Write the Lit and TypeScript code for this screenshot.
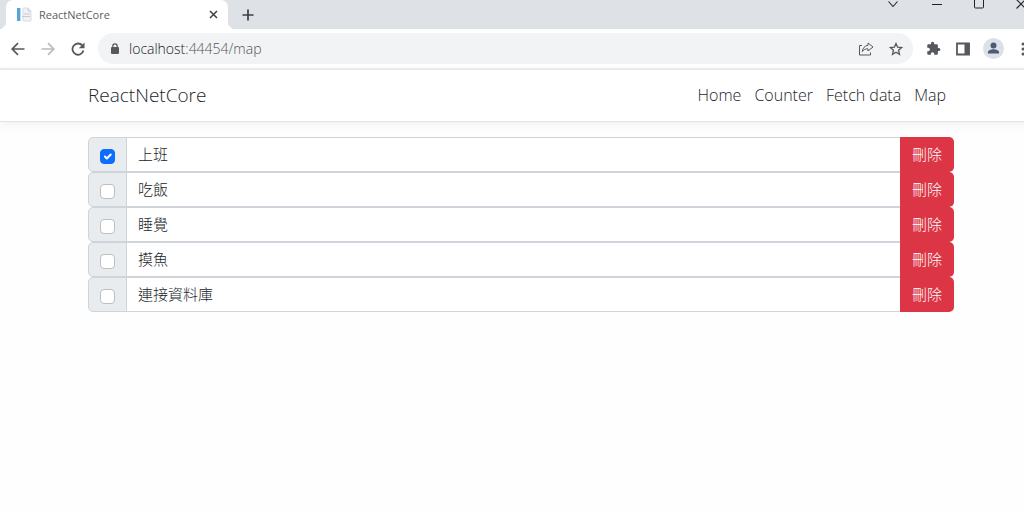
import { LitElement, html, css } from "lit";
import { customElement, state } from "lit/decorators.js";

interface Todo {
  title: string;
  done: boolean;
}

@customElement("browser-chrome")
class BrowserChrome extends LitElement {
  static styles = css`
    :host { display: block; font-family: "Open Sans", "Noto Sans", sans-serif; }
    svg { display: block; }
    button {
      display: flex; align-items: center; justify-content: center;
      padding: 0; border: 0; background: none; color: #55595e; flex: none;
    }
    .tabs { display: flex; height: 29px; background: #dee1e6; padding-left: 6px; }
    .tab {
      position: relative; display: flex; align-items: center; box-sizing: border-box;
      width: 222px; padding: 0 7px 0 11px; background: #fff; border-top-right-radius: 7px;
      border-top-left-radius: 7px;
    }
    .tab::before, .tab::after {
      content: ""; position: absolute; bottom: 0; width: 7px; height: 7px;
    }
    .tab::before { left: -7px; background: radial-gradient(circle at 0 0, #dee1e6 7px, #fff 7px); }
    .tab::after { right: -7px; background: radial-gradient(circle at 100% 0, #dee1e6 7px, #fff 7px); }
    .tab-title { flex: 1; margin-left: 7px; font-size: 11px; font-weight: 400; line-height: 16px; color: #5a5e62; }
    .close { width: 16px; height: 29px; color: #3c4043; }
    .new { width: 40px; color: #3c4043; }
    .window { display: flex; margin-left: auto; height: 9px; }
    .window button { width: 42px; color: #222; align-items: flex-start; }
    .window .search { width: 46px; }
    .bar {
      display: flex; align-items: center; height: 39px; padding: 0 4px 0 3px;
      background: #fff; border-bottom: 2px solid #ebecee;
    }
    .tool { width: 30px; height: 30px; }
    .muted { color: #b9bbbe; }
    .address {
      display: flex; align-items: center; flex: 1; box-sizing: border-box; min-width: 0; height: 31px;
      margin: 0 5px; padding: 0 2px 0 10px; border-radius: 16px; background: #f1f3f4;
    }
    .url { position: relative; flex: 1; margin-left: 7px; font-size: 14px; line-height: 20px; }
    .url input {
      width: 100%; box-sizing: border-box; border: 0; padding: 0; outline: 0; background: none;
      font: inherit; color: transparent; display: block;
    }
    .shown { position: absolute; inset: 0; pointer-events: none; color: #50555a; }
    .host { color: #202124; }
    .avatar { width: 21px; height: 21px; border-radius: 50%; background: #dce0e7; color: #4c5a75; overflow: hidden; }
  `;

  render() {
    return html`
      <div class="tabs">
        <div class="tab">
          <svg width="15" height="15" viewBox="0 0 15 15">
            <path d="M0 1h3v13H0z" fill="#55a6d6" /><path d="M3 1h1v13H3z" fill="#b9dcee" />
            <path d="M6 1h5l3 3v10H6z" fill="#f1f2f5" stroke="#d3d6dc" stroke-width=".8" />
            <path d="M11 1v3h3M7 7h6M5 9.500h8" fill="none" stroke="#bcc2cb" stroke-width=".8" />
          </svg>
          <span class="tab-title">ReactNetCore</span>
          <button class="close" aria-label="Close tab">
            <svg width="9" height="9" viewBox="0 0 9 9"><path d="M1 1l7 7M8 1L1 8" stroke="currentColor" stroke-width="1.5" /></svg>
          </button>
        </div>
        <button class="new" aria-label="New tab">
          <svg width="12" height="12" viewBox="0 0 12 12"><path d="M6 .5v11M.5 6h11" stroke="currentColor" stroke-width="1.7" /></svg>
        </button>
        <div class="window">
          <button class="search" aria-label="Search tabs">
            <svg width="12" height="9" viewBox="0 0 12 9"><path d="M1.500 1.500L6 6.500l4.500-5" fill="none" stroke="currentColor" stroke-width="1.100" /></svg>
          </button>
          <button aria-label="Minimize">
            <svg width="10" height="9" viewBox="0 0 10 9"><path d="M0 4.500h10" stroke="currentColor" /></svg>
          </button>
          <button aria-label="Maximize">
            <svg width="10" height="9" viewBox="0 0 10 9"><rect x=".5" y="-1.500" width="9" height="9.500" rx="1" fill="none" stroke="currentColor" /></svg>
          </button>
          <button aria-label="Close">
            <svg width="10" height="9" viewBox="0 0 10 9"><path d="M.5-.5l9 9M9.500-.5l-9 9" stroke="currentColor" stroke-width="1.100" /></svg>
          </button>
        </div>
      </div>
      <div class="bar">
        <button class="tool" aria-label="Back">
          <svg width="14" height="14" viewBox="0 0 14 14"><path d="M13.500 7H1.500M7 1.200L1.200 7 7 12.800" fill="none" stroke="currentColor" stroke-width="1.700" /></svg>
        </button>
        <button class="tool muted" aria-label="Forward">
          <svg width="14" height="14" viewBox="0 0 14 14"><path d="M.5 7h12M7 1.200L12.800 7 7 12.800" fill="none" stroke="currentColor" stroke-width="1.700" /></svg>
        </button>
        <button class="tool" aria-label="Reload">
          <svg width="14" height="14" viewBox="0 0 14 14">
            <path d="M11.300 3.400A5.600 5.600 0 1 0 12.500 8.600" fill="none" stroke="currentColor" stroke-width="1.800" />
            <path d="M13.500.5v5.800H7.800z" fill="currentColor" />
          </svg>
        </button>
        <div class="address">
          <svg width="14" height="14" viewBox="0 0 14 14">
            <rect x="3" y="5" width="8" height="7" rx="1" fill="#55595e" />
            <path d="M4.800 5.500V4a2.200 2.200 0 0 1 4.400 0v1.500" fill="none" stroke="#55595e" stroke-width="1.200" />
          </svg>
          <div class="url">
            <input aria-label="Address" value="localhost:44454/map" />
            <div class="shown" aria-hidden="true"><span class="host">localhost</span>:44454/map</div>
          </div>
          <button class="tool" aria-label="Share">
            <svg width="16" height="14" viewBox="0 0 16 14" fill="none" stroke="currentColor">
              <path d="M4 3.500H1.500v9.500h11V10.500" />
              <path d="M10 1L15 5l-5 4V6.800C7.500 6.700 5.700 7.500 4.300 9.600 4.700 6 6.700 3.800 10 3.300z" stroke-linejoin="round" />
            </svg>
          </button>
          <button class="tool" aria-label="Bookmark">
            <svg width="14" height="14" viewBox="0 0 14 14"><path d="M7 1.500l1.600 3.700 4 .4-3 2.700.9 4L7 10.200l-3.500 2.100.9-4-3-2.700 4-.4z" fill="none" stroke="currentColor" stroke-width="1.300" /></svg>
          </button>
        </div>
        <button class="tool" aria-label="Extensions">
          <svg width="15" height="15" viewBox="0 0 24 24"><path fill="currentColor" d="M20.500 11H19V7c0-1.100-.9-2-2-2h-4V3.500a2.500 2.500 0 0 0-5 0V5H4c-1.100 0-2 .9-2 2v3.800h1.500a2.700 2.700 0 0 1 0 5.400H2V20c0 1.100.9 2 2 2h3.800v-1.500a2.700 2.700 0 0 1 5.400 0V22H17c1.100 0 2-.9 2-2v-4h1.500a2.500 2.500 0 0 0 0-5z" /></svg>
        </button>
        <button class="tool" aria-label="Side panel">
          <svg width="14" height="14" viewBox="0 0 14 14"><path d="M1 1.500h12v11H1z" fill="none" stroke="currentColor" stroke-width="1.800" /><path d="M8.500 1h5v12h-5z" fill="currentColor" /></svg>
        </button>
        <button class="tool" aria-label="Profile">
          <svg class="avatar" viewBox="0 0 21 21"><circle cx="10.500" cy="7.500" r="3" fill="currentColor" /><path d="M5 15.500v-1.200c0-2 3-3 5.500-3s5.500 1 5.500 3v1.200z" fill="currentColor" /></svg>
        </button>
        <button class="tool" aria-label="Menu">
          <svg width="4" height="14" viewBox="0 0 4 14" fill="currentColor"><circle cx="2" cy="2" r="1.500" /><circle cx="2" cy="7" r="1.500" /><circle cx="2" cy="12" r="1.500" /></svg>
        </button>
      </div>
    `;
  }
}

@customElement("nav-menu")
class NavMenu extends LitElement {
  static styles = css`
    :host { display: block; }
    .navbar {
      border-bottom: 1px solid #e3e4e6; box-shadow: 0 3px 10px rgba(0, 0, 0, 0.06); background: #fff;
    }
    .inner {
      display: flex; align-items: center; justify-content: space-between; box-sizing: border-box;
      max-width: 866px; height: 51px; margin: 0 auto; padding-bottom: 2px;
    }
    a { color: #212529; text-decoration: none; }
    .brand { font-size: 19px; line-height: 28px; }
    .links { display: flex; margin: 0; padding: 0 8px 0 0; gap: 13px; list-style: none; font-size: 16px; line-height: 22px; }
  `;

  render() {
    return html`
      <nav class="navbar">
        <div class="inner">
          <a class="brand" href="#/">ReactNetCore</a>
          <ul class="links">
            ${["Home", "Counter", "Fetch data", "Map"].map(
              (label) => html`<li><a href="#/${label.toLowerCase().replace(" ", "-")}">${label}</a></li>`
            )}
          </ul>
        </div>
      </nav>
    `;
  }
}

@customElement("todo-list")
class TodoList extends LitElement {
  @state() items: Todo[] = [
    { title: "上班", done: true },
    { title: "吃飯", done: false },
    { title: "睡覺", done: false },
    { title: "摸魚", done: false },
    { title: "連接資料庫", done: false },
  ];

  static styles = css`
    :host { display: block; max-width: 866px; margin: 15px auto 0; }
    .row { display: flex; height: 35px; }
    .check {
      display: flex; align-items: center; box-sizing: border-box; width: 39px; padding: 3px 0 0 11px;
      background: #e9ecef; border: 1px solid #ced4da; border-radius: 5px 0 0 5px;
    }
    .box {
      appearance: none; width: 15px; height: 15px; margin: 0; box-sizing: border-box;
      border: 1px solid #bfbfbf; border-radius: 4px; background: #fff;
    }
    .box:checked {
      border-color: #0d6efd;
      background: #0d6efd url("data:image/svg+xml,%3csvg xmlns='http://www.w3.org/2000/svg' viewBox='0 0 20 20'%3e%3cpath fill='none' stroke='%23fff' stroke-linecap='round' stroke-linejoin='round' stroke-width='3' d='M6 10l3 3l6-6'/%3e%3c/svg%3e") center / 13px;
    }
    .text {
      flex: 1; min-width: 0; box-sizing: border-box; margin: 0 0 0 -1px; padding: 0 11px 2px; border: 1px solid #ced4da;
      border-radius: 0; outline: 0; background: #fff; font: inherit; color: #212529;
    }
    .delete {
      width: 54px; margin-left: -1px; padding: 0 0 2px; border: 0; border-radius: 0 5px 5px 0;
      background: #dc3545; color: #fff; font: inherit; z-index: 1;
    }
  `;

  private toggle(item: Todo) {
    this.items = this.items.map((i) => (i === item ? { ...i, done: !i.done } : i));
  }

  private remove(item: Todo) {
    this.items = this.items.filter((i) => i !== item);
  }

  render() {
    return this.items.map(
      (item) => html`
        <div class="row">
          <label class="check">
            <input class="box" type="checkbox" aria-label=${item.title} .checked=${item.done} @change=${() => this.toggle(item)} />
          </label>
          <input class="text" type="text" aria-label="Task" .value=${item.title} />
          <button class="delete" @click=${() => this.remove(item)}>刪除</button>
        </div>
      `
    );
  }
}

@customElement("app-root")
class AppRoot extends LitElement {
  static styles = css`
    :host { display: block; overflow: hidden; min-height: 100vh; background: #fefefe; }
    .shell {
      width: calc(100% + 18px);
      font: 300 15px/22px "Open Sans", "Noto Sans CJK TC", sans-serif;
    }
  `;

  render() {
    return html`
      <div class="shell">
        <browser-chrome></browser-chrome>
        <nav-menu></nav-menu>
        <todo-list></todo-list>
      </div>
    `;
  }
}
